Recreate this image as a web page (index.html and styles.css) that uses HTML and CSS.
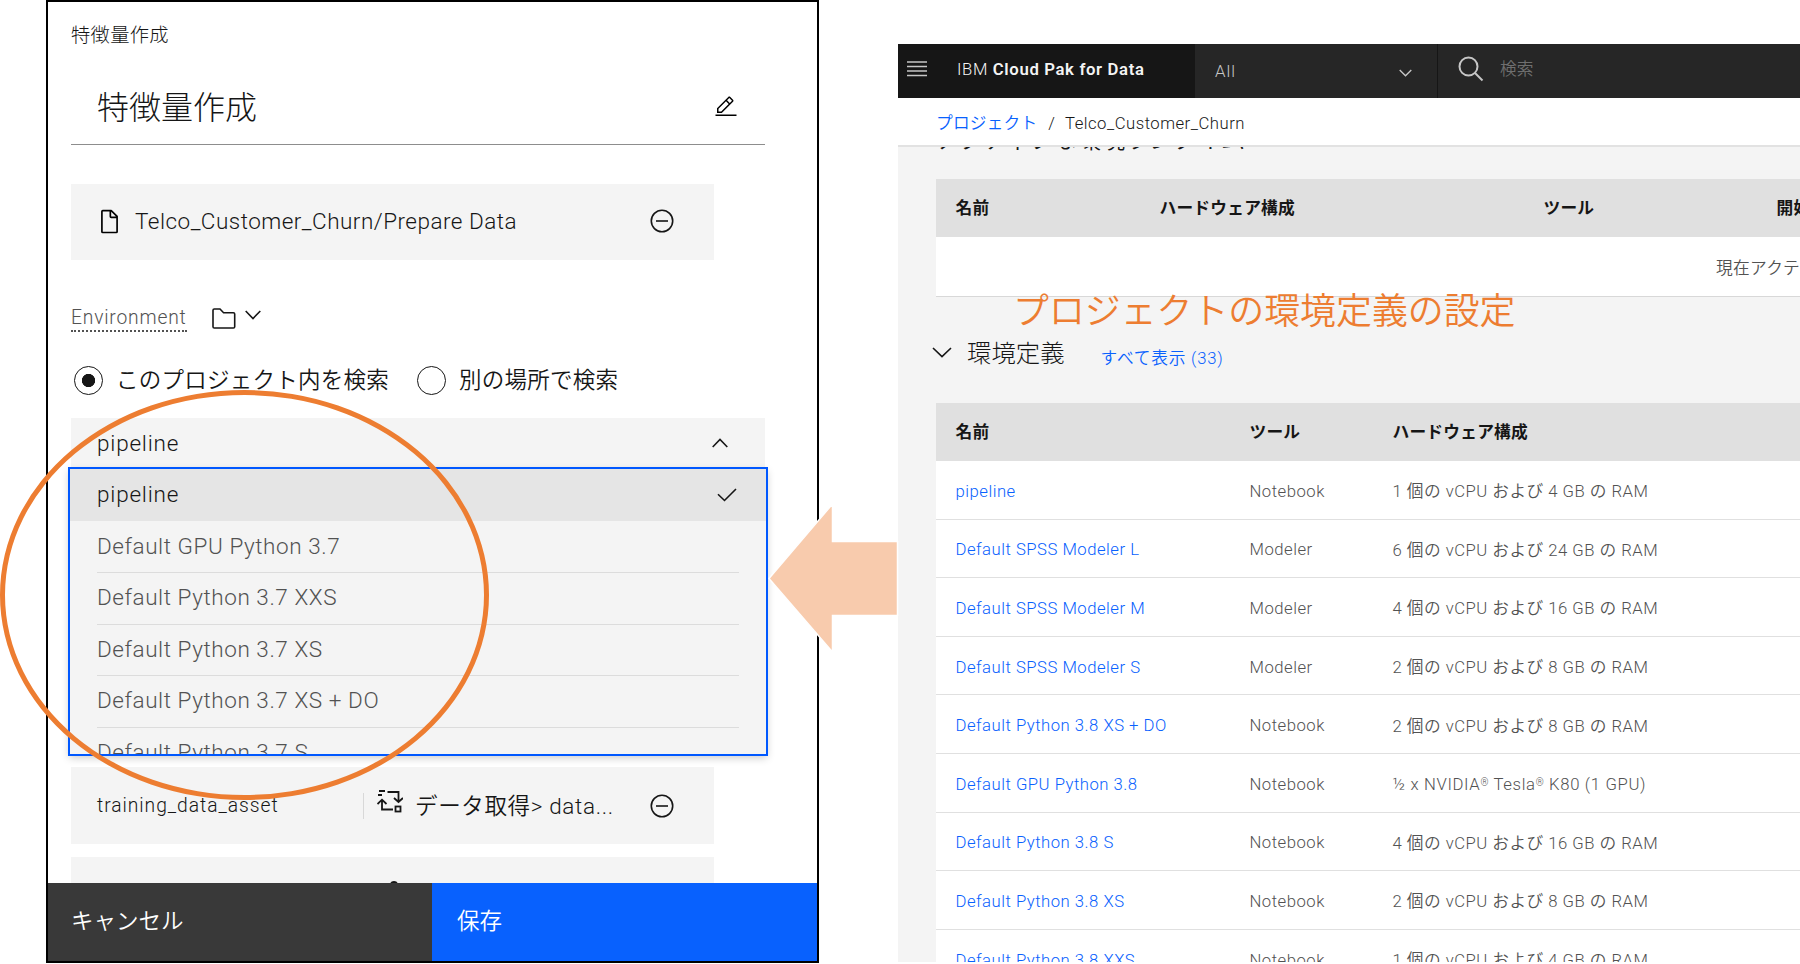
FILE: index.html
```html
<!DOCTYPE html>
<html lang="ja">
<head>
  <meta charset="UTF-8" />
  <meta name="viewport" content="width=device-width, initial-scale=1.0" />
  <title>特徴量作成</title>
  <link rel="stylesheet" href="styles.css">
</head>
<body>
  <section class="panel">
    <div class="panel-body">
      <div class="crumb">特徴量作成</div>
      <div class="title-row">
        <h1>特徴量作成</h1>
        <svg class="edit" width="24" height="24" viewBox="0 0 32 32"><path d="M2 26h28v2H2zM25.4 9c.8-.8.8-2 0-2.8l-3.6-3.6c-.8-.8-2-.8-2.8 0l-15 15V24h6.4l15-15zm-5-5L24 7.600l-3 3L17.400 7l3-3zM6 22v-3.600l10-10 3.600 3.600-10 10H6z"/></svg>
      </div>

      <div class="card file-card">
        <svg width="27" height="27" viewBox="0 0 32 32"><path d="M25.700 9.300l-7-7A.900.900 0 0 0 18 2H8a2 2 0 0 0-2 2v24a2 2 0 0 0 2 2h16a2 2 0 0 0 2-2V10a.900.900 0 0 0-.3-.7zM18 4.400l5.600 5.600H18zM24 28H8V4h8v6a2 2 0 0 0 2 2h6z"/></svg>
        <span class="file-name">Telco_Customer_Churn/Prepare Data</span>
        <svg class="minus" width="24" height="24" viewBox="0 0 24 24"><circle cx="12" cy="12" r="10.700"/><path d="M6 12h12"/></svg>
      </div>

      <div class="env">
        <span class="env-label">Environment</span>
        <svg class="line folder" width="24" height="21" viewBox="0 0 24 21"><path d="M1 18.700V2.300Q1 1 2.300 1H8l3.600 3.700h9.800Q22.700 4.700 22.700 6v12.700Q22.700 20 21.400 20H2.300Q1 20 1 18.700z"/></svg>
        <svg class="line" width="16" height="10" viewBox="0 0 16 10"><path d="M.7 1L8 8.500 15.300 1"/></svg>
      </div>

      <div class="radios">
        <span class="radio on"></span><span class="radio-label">このプロジェクト内を検索</span>
        <span class="radio second"></span><span class="radio-label">別の場所で検索</span>
      </div>

      <div class="select">
        <div class="field">
          <span>pipeline</span>
          <svg class="line" width="16" height="10" viewBox="0 0 16 10"><path d="M.7 9L8 1.500 15.300 9"/></svg>
        </div>
        <ul class="menu">
          <li class="selected">
            <span>pipeline</span>
            <svg class="line" width="20" height="14" viewBox="0 0 20 14"><path d="M1 6.200l6.500 6.300L19 1"/></svg>
          </li>
          <li><span>Default GPU Python 3.7</span></li>
          <li><span>Default Python 3.7 XXS</span></li>
          <li><span>Default Python 3.7 XS</span></li>
          <li><span>Default Python 3.7 XS + DO</span></li>
          <li><span>Default Python 3.7 S</span></li>
        </ul>
      </div>

      <div class="card param">
        <span class="param-name">training_data_asset</span>
        <svg class="flow" width="26" height="23" viewBox="0 0 26 23"><path d="M2 1h6M1 5h4M10.500 2h11v9.500M17 8l4.500 4L26 8M.500 14L5 9.700 9.500 14M5 10v9.500h11"/><rect x="18.500" y="16.500" width="5" height="5"/></svg>
        <span class="param-value">データ取得&gt; data...</span>
        <svg class="minus" width="24" height="24" viewBox="0 0 24 24"><circle cx="12" cy="12" r="10.700"/><path d="M6 12h12"/></svg>
      </div>
      <div class="card next-param"><span class="dot"></span></div>
    </div>
    <div class="actions">
      <button class="cancel">キャンセル</button>
      <button class="save">保存</button>
    </div>
  </section>

  <section class="project">
    <header>
      <div class="brand">
        <svg width="20" height="16" viewBox="0 0 20 16"><path d="M0 1h20M0 5.500h20M0 10h20M0 14.500h20"/></svg>
        <span>IBM <b>Cloud Pak for Data</b></span>
      </div>
      <div class="scope">
        <span>All</span>
        <svg width="13" height="8" viewBox="0 0 13 8"><path d="M.7 1l5.800 5.700L12.300 1"/></svg>
      </div>
      <div class="search">
        <svg width="26" height="26" viewBox="0 0 26 26"><circle cx="10.500" cy="10.500" r="9"/><path d="M17 17l7.500 7.500"/></svg>
        <span>検索</span>
      </div>
    </header>
    <nav><a>プロジェクト</a><i>/</i><span>Telco_Customer_Churn</span></nav>

    <main>
      <div class="clipped"><span>アクティブな環境ランタイム</span></div>
      <div class="table runtimes">
        <div class="row head"><span>名前</span><span>ハードウェア構成</span><span>ツール</span><span>開始済み</span></div>
        <div class="empty">現在アクティブなランタイムはありません</div>
      </div>
      <div class="section-title">
        <svg class="line" width="20" height="11" viewBox="0 0 20 11"><path d="M1 1l9 8.700L19 1"/></svg>
        <h2>環境定義</h2>
        <a>すべて表示 (33)</a>
      </div>
      <div class="table envs">
        <div class="row head"><span>名前</span><span>ツール</span><span>ハードウェア構成</span></div>
        <div class="row"><a>pipeline</a><span>Notebook</span><span class="hw">1 個の vCPU および 4 GB の RAM</span></div>
        <div class="row"><a>Default SPSS Modeler L</a><span>Modeler</span><span class="hw">6 個の vCPU および 24 GB の RAM</span></div>
        <div class="row"><a>Default SPSS Modeler M</a><span>Modeler</span><span class="hw">4 個の vCPU および 16 GB の RAM</span></div>
        <div class="row"><a>Default SPSS Modeler S</a><span>Modeler</span><span class="hw">2 個の vCPU および 8 GB の RAM</span></div>
        <div class="row"><a>Default Python 3.8 XS + DO</a><span>Notebook</span><span class="hw">2 個の vCPU および 8 GB の RAM</span></div>
        <div class="row"><a>Default GPU Python 3.8</a><span>Notebook</span><span class="hw gpu">½ x NVIDIA<sup>®</sup> Tesla<sup>®</sup> K80 (1 GPU)</span></div>
        <div class="row"><a>Default Python 3.8 S</a><span>Notebook</span><span class="hw">4 個の vCPU および 16 GB の RAM</span></div>
        <div class="row"><a>Default Python 3.8 XS</a><span>Notebook</span><span class="hw">2 個の vCPU および 8 GB の RAM</span></div>
        <div class="row"><a>Default Python 3.8 XXS</a><span>Notebook</span><span class="hw">1 個の vCPU および 4 GB の RAM</span></div>
      </div>
    </main>
  </section>

  <!-- annotations -->
  <div class="note">プロジェクトの環境定義の設定</div>
  <div class="ring"></div>
  <svg class="arrow" width="130" height="150" viewBox="0 0 130 150"><path d="M1 75.500L64.500 1v37.500h65v74h-65V149z"/></svg>
</body>
</html>
```
FILE: styles.css
```css
:root {
  --ink: #161616;
  --text: #525252;
  --blue: #0861fe;
  --gray: #f4f4f4;
  --line: #e0e0e0;
  --orange: #ed7d31;
}
* {
  box-sizing: border-box;
}
body {
  margin: 0;
  width: 1800px;
  height: 964px;
  overflow: hidden;
  position: relative;
  display: flex;
  background: #fff;
  color: var(--ink);
  font-family: Roboto, "Noto Sans CJK JP", sans-serif;
  font-weight: 350;
}
h1, h2, ul {
  margin: 0;
  padding: 0;
  font-weight: 300;
}
svg {
  display: block;
  flex: none;
}
span, a, h1, h2 {
  white-space: nowrap;
}
a {
  color: var(--blue);
}
.line {
  fill: none;
  stroke: var(--ink);
  stroke-width: 1.6;
}

/* left panel */
.panel {
  flex: none;
  width: 773px;
  height: 963px;
  margin-left: 46px;
  border: 2px solid #000;
  display: flex;
  flex-direction: column;
}
.panel-body {
  flex: 1;
  min-height: 0;
  overflow: hidden;
  padding: 18px 52px 0 23px;
}
.crumb {
  height: 30px;
  line-height: 32px;
  font-size: 19.3px;
  font-weight: 300;
  letter-spacing: 0.3px;
}
.title-row {
  height: 95px;
  padding: 19px 26px 0 26px;
  border-bottom: 1px solid #8d8d8d;
  display: flex;
  justify-content: space-between;
}
h1 {
  font-size: 32px;
  line-height: 76px;
  height: 76px;
  margin-top: 1px;
}
.edit {
  margin-top: 26px;
  margin-right: 1px;
}
.card {
  width: 643px;
  background: var(--gray);
  display: flex;
  align-items: center;
}
.file-card {
  height: 76px;
  margin-top: 39px;
  padding: 0 40px 2px 25px;
}
.file-name {
  margin-left: 12px;
  font-size: 22.5px;
  letter-spacing: 0.48px;
}
.minus {
  margin-left: auto;
  fill: none;
  stroke: var(--ink);
  stroke-width: 1.6;
}
.env {
  margin-top: 44px;
  display: flex;
  height: 28px;
}
.env-label {
  height: 28px;
  line-height: 28px;
  border-bottom: 2px dotted #525252;
  color: var(--text);
  font-size: 19.3px;
  letter-spacing: 0.8px;
}
.folder {
  margin: 4px 9px 0 25px;
}
.env .line:last-child {
  margin-top: 6px;
}
.radios {
  display: flex;
  align-items: center;
  height: 30px;
  margin-top: 33px;
  padding-left: 3px;
  font-size: 22.5px;
}
.radio {
  flex: none;
  width: 29px;
  height: 29px;
  margin-right: 13px;
  border: 1.5px solid var(--ink);
  border-radius: 50%;
}
.radio-label {
  margin-top: -4px;
  letter-spacing: 0.25px;
}
.radio.on {
  background: radial-gradient(circle, var(--ink) 6.3px, transparent 6.9px);
}
.radio.second {
  margin-left: 28px;
}
.select {
  position: relative;
  width: 694px;
  height: 349px;
  margin-top: 23px;
  font-size: 22.5px;
}
.field {
  height: 51px;
  padding: 0 37px 1px 26px;
  background: var(--gray);
  display: flex;
  align-items: center;
  justify-content: space-between;
  letter-spacing: 0.8px;
}
.menu {
  position: absolute;
  top: 50px;
  left: -2px;
  width: 698px;
  height: 287px;
  overflow: hidden;
  list-style: none;
  background: var(--gray);
  border: 1px solid #0058ff;
  outline: 0.5px solid #0058ff;
  box-shadow: 0 3px 8px rgba(0, 0, 0, 0.2);
}
.menu li {
  height: 51.5px;
  padding: 0 27px;
  color: var(--text);
}
.menu li span {
  display: block;
  height: 52.5px;
  line-height: 51px;
  border-bottom: 1px solid #dcdcdc;
  letter-spacing: 0.57px;
}
.menu .selected {
  display: flex;
  justify-content: space-between;
  align-items: center;
  padding-right: 29px;
  background: #e5e5e5;
  color: var(--ink);
}
.menu .selected span {
  border: 0;
  letter-spacing: 0.8px;
}
.param {
  height: 77px;
  padding: 0 40px 0 26px;
}
.param-name {
  width: 267px;
  height: 26px;
  line-height: 26px;
  border-right: 1px solid #d8d8d8;
  font-size: 19.3px;
  letter-spacing: 0.95px;
}
.flow {
  margin: -9px 12px 0 13px;
  fill: none;
  stroke: var(--ink);
  stroke-width: 1.8;
}
.param-value {
  margin-top: -4px;
  font-size: 22.5px;
  letter-spacing: 0.65px;
}
.next-param {
  height: 77px;
  margin-top: 13px;
  align-items: flex-start;
}
.dot {
  width: 8px;
  height: 8px;
  margin: 24px 0 0 319px;
  border-radius: 50%;
  background: var(--ink);
}
.actions {
  display: flex;
  height: 78px;
}
.actions button {
  border: 0;
  padding: 0 0 6px 23px;
  text-align: left;
  color: #fff;
  font: 350 22.5px Roboto, "Noto Sans CJK JP", sans-serif;
}
.actions .cancel {
  width: 384px;
  background: #393939;
}
.actions .save {
  flex: 1;
  padding-left: 25px;
  background: var(--blue);
}

/* right side */
.project {
  flex: none;
  width: 902px;
  height: 918px;
  margin: 44px 0 0 79px;
  overflow: hidden;
  background: var(--gray);
  font-size: 16.7px;
}
header {
  display: flex;
  height: 54px;
  background: #262626;
}
header svg {
  fill: none;
  stroke: #c6c6c6;
  stroke-width: 1.4;
}
.brand {
  width: 297px;
  padding: 0 0 4px 9px;
  background: var(--ink);
  display: flex;
  align-items: center;
  color: #f4f4f4;
  letter-spacing: 0.65px;
}
.brand span {
  margin-left: 30px;
}
.brand b {
  font-weight: 600;
}
.scope {
  width: 243px;
  padding: 0 25px 0 20px;
  border-right: 1px solid #161616;
  display: flex;
  align-items: center;
  justify-content: space-between;
  color: #c6c6c6;
  letter-spacing: 1px;
}
.scope svg {
  margin-top: 3px;
}
.search {
  display: flex;
  align-items: center;
  padding: 0 0 5px 20px;
  color: #6f6f6f;
}
.search span {
  margin-top: -1px;
}
.search svg {
  margin-right: 16px;
  stroke-width: 2;
}
nav {
  height: 49px;
  line-height: 51px;
  background: #fff;
  border-bottom: 2px solid #e2e2e2;
  padding-left: 38px;
  display: flex;
}
nav a {
  letter-spacing: 0.2px;
}
nav i {
  margin: 0 10px 0 11px;
  font-style: normal;
}
nav span {
  letter-spacing: 0.5px;
}
.clipped {
  height: 32px;
  overflow: hidden;
  padding-left: 38px;
  font-size: 24px;
}
.clipped span {
  display: block;
  line-height: 24px;
  margin-top: -19px;
}
.table {
  margin-left: 38px;
  background: #fff;
}
.row {
  display: grid;
  height: 58.6px;
  align-items: center;
  padding: 3px 0 0 19.500px;
  border-bottom: 1.5px solid var(--line);
  color: var(--text);
  letter-spacing: 0.5px;
}
.row.head {
  height: 58px;
  padding: 0 0 1px 19.500px;
  background: var(--line);
  color: var(--ink);
  font-weight: 600;
  letter-spacing: 0.25px;
}
.runtimes .row {
  grid-template-columns: 204px 384px 233px 100px;
}
.envs .row {
  grid-template-columns: 294px 143px 1fr;
}
.row .hw {
  margin-top: -2px;
  letter-spacing: 0.48px;
}
.row .gpu {
  margin-top: 0;
  letter-spacing: 0.65px;
}
.row sup {
  font-size: 10px;
  line-height: 0;
  vertical-align: 4px;
}
.empty {
  height: 60px;
  line-height: 63px;
  padding-left: 780px;
  border-bottom: 1px solid #d8d8d8;
  white-space: nowrap;
  color: var(--text);
  letter-spacing: 0.3px;
  overflow: hidden;
}
.section-title {
  display: flex;
  height: 106px;
  padding-left: 34px;
}
.section-title svg {
  margin-top: 50px;
}
.section-title h2 {
  margin: 39px 36px 0 15px;
  font-size: 24.4px;
  line-height: 36px;
}
.section-title a {
  margin-top: 49px;
  line-height: 26px;
  letter-spacing: 0.8px;
}

/* annotations */
.note {
  position: absolute;
  left: 1013px;
  top: 287px;
  color: var(--orange);
  font-size: 35.9px;
  line-height: 50px;
  white-space: nowrap;
}
.ring {
  position: absolute;
  left: 0;
  top: 390px;
  width: 489px;
  height: 410px;
  border: 5px solid var(--orange);
  border-radius: 50%;
}
.arrow {
  position: absolute;
  left: 768px;
  top: 503px;
  overflow: visible;
  fill: #f8cbad;
  stroke: #fff;
  stroke-width: 1.5;
}
```
